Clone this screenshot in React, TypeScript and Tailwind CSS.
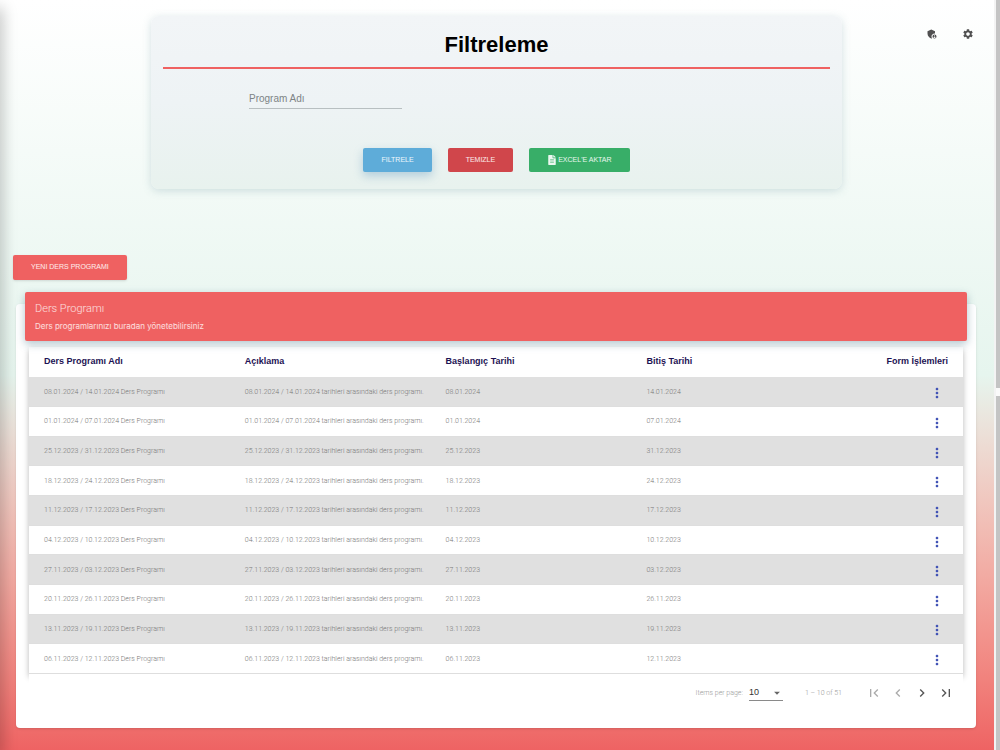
import { MdSettings, MdAdminPanelSettings, MdMoreVert, MdFirstPage, MdLastPage, MdChevronLeft, MdChevronRight, MdArrowDropDown } from "react-icons/md";
import { FaFileAlt } from "react-icons/fa";

const weeks: [string, string][] = [
  ["08.01.2024", "14.01.2024"],
  ["01.01.2024", "07.01.2024"],
  ["25.12.2023", "31.12.2023"],
  ["18.12.2023", "24.12.2023"],
  ["11.12.2023", "17.12.2023"],
  ["04.12.2023", "10.12.2023"],
  ["27.11.2023", "03.12.2023"],
  ["20.11.2023", "26.11.2023"],
  ["13.11.2023", "19.11.2023"],
  ["06.11.2023", "12.11.2023"],
];

const button = "h-6 rounded-xs px-[18px] text-[7px] text-white/90 uppercase";

function Filter() {
  return (
    <section className="mr-[152px] ml-[151px] mt-4 flex h-[173px] flex-col rounded-lg bg-linear-to-b from-[#f2f5f7] via-[#eef3f5] via-50% to-[#e8f2ee] px-3 shadow-[0_2px_8px_rgba(120,160,170,0.3)]">
      <h1 className="flex h-[53px] items-center justify-center border-b-2 border-[#ef6161] pt-[6px] text-[22px] font-bold text-black">Filtreleme</h1>
      <form className="flex flex-1 flex-col" onSubmit={(e) => e.preventDefault()}>
        <input
          aria-label="Program Adı"
          placeholder="Program Adı"
          className="mt-5 ml-[86px] h-5 w-[153px] border-b border-[#b8bfc1] bg-transparent text-[10px] outline-none placeholder:text-[#7d8385]"
        />
        <div className="mt-[39px] flex justify-center gap-4">
          <button type="submit" className={`${button} bg-[#5eacd9] shadow-[0_4px_10px_rgba(94,150,190,0.4)]`}>Filtrele</button>
          <button type="reset" className={`${button} bg-[#d0464b]`}>Temizle</button>
          <button type="button" className={`${button} flex items-center gap-px bg-[#38ae68]`}>
            <FaFileAlt className="h-[10px] w-[10px]" />
            Excel'e Aktar
          </button>
        </div>
      </form>
    </section>
  );
}

function ProgramTable() {
  return (
    <table className="h-[327px] w-full table-fixed bg-white text-left shadow-[0_3px_6px_rgba(0,0,0,0.28)]">
      <colgroup>
        <col className="w-[23%]" />
        <col className="w-[21.5%]" />
        <col className="w-[21.5%]" />
        <col className="w-[21.5%]" />
        <col />
      </colgroup>
      <thead>
        <tr className="h-[30px] text-[9px] text-[#1d1253]">
          <th className="pl-[15px]">Ders Programı Adı</th>
          <th className="pl-px">Açıklama</th>
          <th className="pl-px">Başlangıç Tarihi</th>
          <th className="pl-px">Bitiş Tarihi</th>
          <th className="pr-[15px] text-right">Form İşlemleri</th>
        </tr>
      </thead>
      <tbody className="font-['Roboto',sans-serif] text-[7px] leading-[10px] font-light text-[#777]">
        {weeks.map(([start, end]) => (
          <tr key={start} className="h-[29px] border-b border-[#dedede] odd:bg-[#e0e0e0]">
            <td className="pl-[15px] whitespace-nowrap">{start} / {end} Ders Programı</td>
            <td className="pl-px whitespace-nowrap">{start} / {end} tarihleri arasındaki ders programı.</td>
            <td className="pl-px">{start}</td>
            <td className="pl-px">{end}</td>
            <td className="pt-[3px] pr-[18px]">
              <button type="button" aria-label="Form işlemleri" className="ml-auto block text-[#3f51b5]">
                <MdMoreVert className="size-4" />
              </button>
            </td>
          </tr>
        ))}
      </tbody>
    </table>
  );
}

function Paginator() {
  return (
    <nav className="relative flex h-[38px] items-center justify-end bg-white pr-[9px] font-['Roboto',sans-serif] text-[7px] font-light text-[#999]">
      <label htmlFor="size">Items per page:</label>
      <span className="relative ml-[6px] flex">
        <select id="size" className="h-[15px] w-[34px] appearance-none border-b border-[#8a8a8a] bg-transparent font-['Liberation_Sans',sans-serif] text-[9px] text-[#333] outline-none">
          <option>10</option>
        </select>
        <MdArrowDropDown className="pointer-events-none absolute -right-px top-0 size-[14px] text-[#666]" />
      </span>
      <span className="ml-[22px] mr-6">1 – 10 of 51</span>
      <div className="flex gap-2 text-[#555]">
        <button type="button" aria-label="First page" disabled className="text-[#aaa]"><MdFirstPage className="size-4" /></button>
        <button type="button" aria-label="Previous page" disabled className="text-[#aaa]"><MdChevronLeft className="size-4" /></button>
        <button type="button" aria-label="Next page"><MdChevronRight className="size-4" /></button>
        <button type="button" aria-label="Last page"><MdLastPage className="size-4" /></button>
      </div>
    </nav>
  );
}

export default function App() {
  return (
    <div className="flex min-h-screen font-['Liberation_Sans',Arial,sans-serif]">
      <main className="relative flex-1 overflow-hidden bg-linear-to-b from-white via-[#e6f5ee] via-50% to-[#ee6363] pb-[22px]">
        <div className="absolute inset-y-0 -left-2 w-2 shadow-[0_8px_16px_rgba(0,0,0,0.4)]" />
        <div className="absolute right-5 top-7 flex gap-6 text-[#505050]">
          <button type="button" aria-label="Yönetim"><MdAdminPanelSettings className="size-3" /></button>
          <button type="button" aria-label="Ayarlar"><MdSettings className="size-3" /></button>
        </div>
        <Filter />
        <button type="button" className="mt-[66px] ml-[13px] h-[25px] rounded-xs bg-[#ef6161] px-[18px] text-[7px] text-white/90 shadow-sm">YENI DERS PROGRAMI</button>
        <section className="mx-4 mr-[18px] mt-6 rounded-sm bg-white px-[13px] pb-4 shadow-sm">
          <header className="relative -top-3 -mx-1 -mb-[6px] h-[49px] rounded-xs bg-[#ef6161] px-[10px] pt-[9px] text-white/80 shadow-[0_3px_8px_rgba(60,110,130,0.4)]">
            <h2 className="font-['Roboto',sans-serif] text-[11px] leading-4 font-light">Ders Programı</h2>
            <p className="mt-[3px] font-['Inter',sans-serif] text-[8px] leading-3">Ders programlarınızı buradan yönetebilirsiniz</p>
          </header>
          <ProgramTable />
          <Paginator />
        </section>
      </main>
      <div aria-hidden="true" className="flex w-[6px] flex-col gap-2 border-l-2 border-[#f3f3f3] bg-[#fafafa]">
        <div className="h-[388px] bg-[#c4c4c4]" />
        <div className="flex-1 bg-[#c4c4c4]" />
      </div>
    </div>
  );
}
